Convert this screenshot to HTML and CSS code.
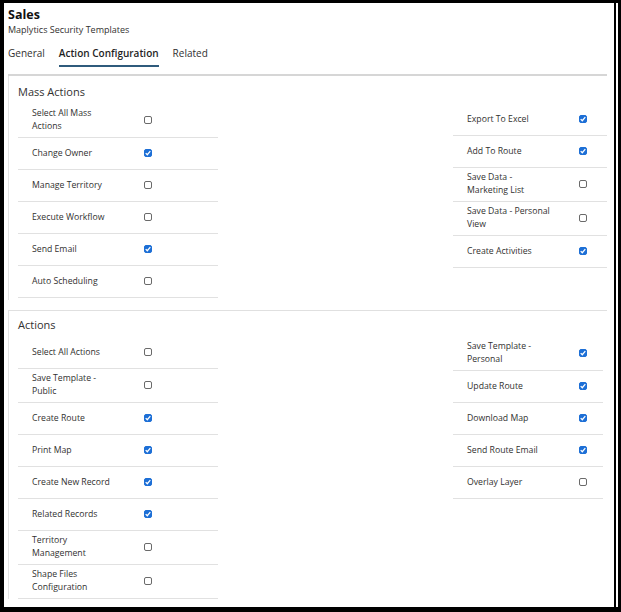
FILE: index.html
```html
<!DOCTYPE html>
<html lang="en">
<head>
<meta charset="utf-8">
<title>Sales - Maplytics Security Templates</title>
<link rel="stylesheet" href="styles.css">
</head>
<body>
<div class="frame">
  <div class="page">
    <header class="head">
      <h1 class="title">Sales</h1>
      <div class="subtitle">Maplytics Security Templates</div>
      <nav class="tabs">
        <span class="tab">General</span>
        <span class="tab active">Action Configuration</span>
        <span class="tab">Related</span>
      </nav>
    </header>

    <section class="card card-mass">
      <h2 class="card-title">Mass Actions</h2>
      <div class="grid">
        <div class="col">
          <div class="row"><span class="label">Select All Mass Actions</span><span class="cb"></span></div>
          <div class="row"><span class="label">Change Owner</span><span class="cb on"><svg viewBox="0 0 8 8"><path d="M1.7 4.1 L3.3 5.7 L6.3 2.2"/></svg></span></div>
          <div class="row"><span class="label">Manage Territory</span><span class="cb"></span></div>
          <div class="row"><span class="label">Execute Workflow</span><span class="cb"></span></div>
          <div class="row"><span class="label">Send Email</span><span class="cb on"><svg viewBox="0 0 8 8"><path d="M1.7 4.1 L3.3 5.7 L6.3 2.2"/></svg></span></div>
          <div class="row"><span class="label">Auto Scheduling</span><span class="cb"></span></div>
        </div>
        <div class="spacer"></div>
        <div class="col">
          <div class="row"><span class="label">Export To Excel</span><span class="cb on"><svg viewBox="0 0 8 8"><path d="M1.7 4.1 L3.3 5.7 L6.3 2.2"/></svg></span></div>
          <div class="row"><span class="label">Add To Route</span><span class="cb on"><svg viewBox="0 0 8 8"><path d="M1.7 4.1 L3.3 5.7 L6.3 2.2"/></svg></span></div>
          <div class="row"><span class="label">Save Data - Marketing List</span><span class="cb"></span></div>
          <div class="row"><span class="label">Save Data - Personal View</span><span class="cb"></span></div>
          <div class="row"><span class="label">Create Activities</span><span class="cb on"><svg viewBox="0 0 8 8"><path d="M1.7 4.1 L3.3 5.7 L6.3 2.2"/></svg></span></div>
        </div>
      </div>
    </section>

    <section class="card card-actions">
      <h2 class="card-title">Actions</h2>
      <div class="grid">
        <div class="col">
          <div class="row"><span class="label">Select All Actions</span><span class="cb"></span></div>
          <div class="row"><span class="label">Save Template - Public</span><span class="cb"></span></div>
          <div class="row"><span class="label">Create Route</span><span class="cb on"><svg viewBox="0 0 8 8"><path d="M1.7 4.1 L3.3 5.7 L6.3 2.2"/></svg></span></div>
          <div class="row"><span class="label">Print Map</span><span class="cb on"><svg viewBox="0 0 8 8"><path d="M1.7 4.1 L3.3 5.7 L6.3 2.2"/></svg></span></div>
          <div class="row"><span class="label">Create New Record</span><span class="cb on"><svg viewBox="0 0 8 8"><path d="M1.7 4.1 L3.3 5.7 L6.3 2.2"/></svg></span></div>
          <div class="row"><span class="label">Related Records</span><span class="cb on"><svg viewBox="0 0 8 8"><path d="M1.7 4.1 L3.3 5.7 L6.3 2.2"/></svg></span></div>
          <div class="row"><span class="label">Territory Management</span><span class="cb"></span></div>
          <div class="row"><span class="label">Shape Files Configuration</span><span class="cb"></span></div>
        </div>
        <div class="spacer"></div>
        <div class="col">
          <div class="row"><span class="label">Save Template - Personal</span><span class="cb on"><svg viewBox="0 0 8 8"><path d="M1.7 4.1 L3.3 5.7 L6.3 2.2"/></svg></span></div>
          <div class="row"><span class="label">Update Route</span><span class="cb on"><svg viewBox="0 0 8 8"><path d="M1.7 4.1 L3.3 5.7 L6.3 2.2"/></svg></span></div>
          <div class="row"><span class="label">Download Map</span><span class="cb on"><svg viewBox="0 0 8 8"><path d="M1.7 4.1 L3.3 5.7 L6.3 2.2"/></svg></span></div>
          <div class="row"><span class="label">Send Route Email</span><span class="cb on"><svg viewBox="0 0 8 8"><path d="M1.7 4.1 L3.3 5.7 L6.3 2.2"/></svg></span></div>
          <div class="row"><span class="label">Overlay Layer</span><span class="cb"></span></div>
        </div>
      </div>
    </section>
  </div>
</div>
</body>
</html>
```

FILE: styles.css
```css
* { box-sizing: border-box; }

html, body {
  margin: 0;
  padding: 0;
  background: #fff;
}

body {
  font-family: "Open Sans", "Noto Sans", sans-serif;
  color: #323130;
}

.frame {
  width: 621px;
  height: 612px;
  border-style: solid;
  border-color: #000;
  border-width: 3px 3px 5px 4px;
  display: flex;
  overflow: hidden;
}

.page {
  flex: 1;
  margin-right: 2px;
  border-right: 2px solid #000;
  padding: 3px 7px 0 4px;
  overflow: hidden;
}

.title {
  margin: 0;
  font-size: 12.5px;
  line-height: 18px;
  font-weight: 700;
  color: #111;
}

.subtitle {
  font-size: 9px;
  line-height: 12px;
  color: #323130;
}

.tabs {
  display: flex;
  gap: 14px;
  margin-top: 10px;
  padding-bottom: 7px;
  border-bottom: 2px solid #d6d6d6;
}

.tab {
  font-size: 10px;
  line-height: 14px;
  padding-bottom: 5px;
  border-bottom: 2px solid transparent;
  color: #323130;
}

.tab.active {
  font-weight: 600;
  color: #1f1f1f;
  border-bottom-color: #2f5b7c;
}

.card {
  border-left: 1px solid #e3e3e3;
  padding-left: 9px;
}

.card-mass {
  padding-top: 8px;
  padding-bottom: 2px;
}

.card-actions {
  margin-top: 10px;
  border-top: 1px solid #e0e0e0;
  padding-top: 6px;
}

.card-title {
  margin: 0 0 4px;
  font-size: 11px;
  line-height: 16px;
  font-weight: 400;
  color: #323130;
}

.grid {
  display: grid;
  grid-template-columns: 200px 1fr 154px;
  align-items: start;
}

.card-actions .grid {
  grid-template-columns: 200px 1fr 150px;
  padding-right: 4px;
}

.row {
  display: flex;
  align-items: center;
  min-height: 32px;
  padding: 3px 0 4px 14px;
  border-bottom: 1px solid #e1e1e1;
}

.label {
  flex: 0 0 112px;
  padding-right: 25px;
  font-size: 8.7px;
  line-height: 13px;
  color: #323130;
}

.cb {
  flex: 0 0 8px;
  width: 8px;
  height: 8px;
  border: 1px solid #6a6a6a;
  border-radius: 2px;
  background: #fff;
  display: flex;
}

.cb.on {
  border-color: #1d6fd6;
  background: #1d6fd6;
}

.cb svg {
  width: 8px;
  height: 8px;
  margin: -1px;
}

.cb svg path {
  fill: none;
  stroke: #fff;
  stroke-width: 1.3;
}
```
